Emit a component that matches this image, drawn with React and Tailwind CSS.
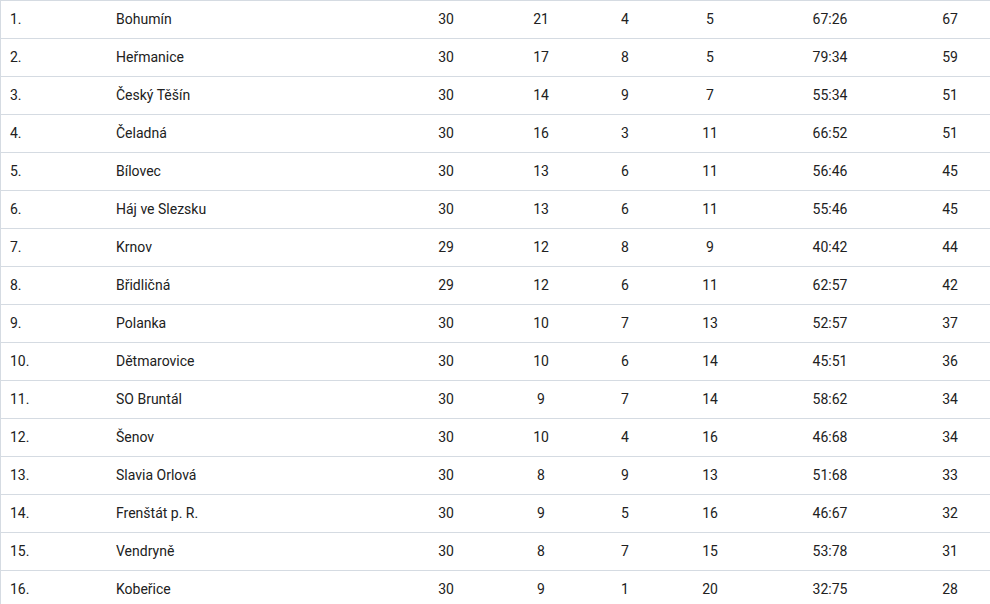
const rows = [
  ['1.', 'Bohumín', 30, 21, 4, 5, '67:26', 67],
  ['2.', 'Heřmanice', 30, 17, 8, 5, '79:34', 59],
  ['3.', 'Český Těšín', 30, 14, 9, 7, '55:34', 51],
  ['4.', 'Čeladná', 30, 16, 3, 11, '66:52', 51],
  ['5.', 'Bílovec', 30, 13, 6, 11, '56:46', 45],
  ['6.', 'Háj ve Slezsku', 30, 13, 6, 11, '55:46', 45],
  ['7.', 'Krnov', 29, 12, 8, 9, '40:42', 44],
  ['8.', 'Břidličná', 29, 12, 6, 11, '62:57', 42],
  ['9.', 'Polanka', 30, 10, 7, 13, '52:57', 37],
  ['10.', 'Dětmarovice', 30, 10, 6, 14, '45:51', 36],
  ['11.', 'SO Bruntál', 30, 9, 7, 14, '58:62', 34],
  ['12.', 'Šenov', 30, 10, 4, 16, '46:68', 34],
  ['13.', 'Slavia Orlová', 30, 8, 9, 13, '51:68', 33],
  ['14.', 'Frenštát p. R.', 30, 9, 5, 16, '46:67', 32],
  ['15.', 'Vendryně', 30, 8, 7, 15, '53:78', 31],
  ['16.', 'Kobeřice', 30, 9, 1, 20, '32:75', 28],
]

export default function App() {
  return (
    <div className="bg-white min-h-screen font-['Roboto',sans-serif] text-[14px] text-[#212121]">
      <div className="border-t border-l border-[#d5dbe2]">
        {rows.map((r) => (
          <div
            key={r[0]}
            className="grid grid-cols-[104px_295px_92px_98px_70px_100px_140px_90px] h-[38px] items-center border-b border-[#d5dbe2]"
          >
            <div className="pl-[9px]">{r[0]}</div>
            <div className="pl-[11px]">{r[1]}</div>
            <div className="text-center">{r[2]}</div>
            <div className="text-center">{r[3]}</div>
            <div className="text-center">{r[4]}</div>
            <div className="text-center">{r[5]}</div>
            <div className="text-center">{r[6]}</div>
            <div className="text-center pl-[10px]">{r[7]}</div>
          </div>
        ))}
      </div>
    </div>
  )
}
